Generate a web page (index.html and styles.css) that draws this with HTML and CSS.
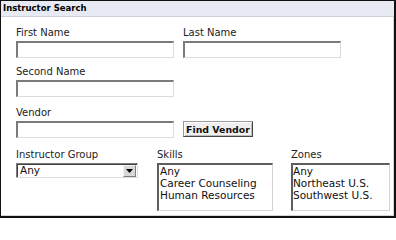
FILE: index.html
```html
<!DOCTYPE html>
<html>
<head>
<meta charset="utf-8">
<link rel="stylesheet" href="styles.css">
</head>
<body>
<div class="panel">
  <div class="panel-head">Instructor Search</div>
  <div class="panel-body">
    <div class="row">
      <div class="field w-first">
        <label class="lbl">First Name</label>
        <input class="txt" type="text">
      </div>
      <div class="field">
        <label class="lbl">Last Name</label>
        <input class="txt" type="text">
      </div>
    </div>
    <div class="row gap-7">
      <div class="field">
        <label class="lbl">Second Name</label>
        <input class="txt" type="text">
      </div>
    </div>
    <div class="row gap-9">
      <div class="field w-first">
        <label class="lbl">Vendor</label>
        <input class="txt" type="text">
      </div>
      <div class="field field-btn">
        <button class="btn" type="button">Find Vendor</button>
      </div>
    </div>
    <div class="row gap-10">
      <div class="field w-col1">
        <label class="lbl">Instructor Group</label>
        <div class="select">
          <span class="select-val">Any</span>
          <span class="select-arrow"><svg width="7" height="4" viewBox="0 0 7 4"><path d="M0 0h7L3.5 4z" fill="#000"/></svg></span>
        </div>
      </div>
      <div class="field w-col2">
        <label class="lbl">Skills</label>
        <div class="listbox lb-skills">
          <div class="opt">Any</div>
          <div class="opt">Career Counseling</div>
          <div class="opt">Human Resources</div>
        </div>
      </div>
      <div class="field">
        <label class="lbl">Zones</label>
        <div class="listbox lb-zones">
          <div class="opt">Any</div>
          <div class="opt">Northeast U.S.</div>
          <div class="opt">Southwest U.S.</div>
        </div>
      </div>
    </div>
  </div>
</div>
</body>
</html>
```

FILE: styles.css
```css
html, body {
  margin: 0;
  padding: 0;
  background: #fff;
}
.panel {
  box-sizing: border-box;
  width: 396px;
  height: 218px;
  border-style: solid;
  border-color: #111;
  border-width: 1px 2px 2px 1px;
  box-shadow: inset -1px -1px 0 #d6d6d6;
  font-family: "DejaVu Sans", Verdana, sans-serif;
  color: #222;
}
.panel-head {
  height: 15px;
  line-height: 15px;
  padding-left: 2px;
  background: #e7eaf3;
  border-bottom: 1px solid #cfd2dc;
  font-size: 8.5px;
  font-weight: bold;
  color: #000;
}
.panel-body {
  padding: 9px 0 0 15px;
}
.row {
  display: flex;
}
.gap-7 { margin-top: 7px; }
.gap-9 { margin-top: 9px; }
.gap-10 { margin-top: 10px; }
.field {
  display: flex;
  flex-direction: column;
  align-items: flex-start;
}
.w-first { width: 167px; }
.w-col1 { width: 141px; }
.w-col2 { width: 134px; }
.field-btn {
  padding-top: 15px;
}
.lbl {
  display: block;
  height: 13px;
  line-height: 13px;
  margin-bottom: 2px;
  font-size: 10px;
  white-space: nowrap;
}
.txt {
  box-sizing: border-box;
  width: 158px;
  height: 17px;
  margin: 0;
  padding: 0 2px;
  background: #fff;
  border-style: solid;
  border-width: 2px 1px 1px 2px;
  border-color: #7b7b7b #dcdcdc #dcdcdc #7b7b7b;
  outline: none;
  font-family: "DejaVu Sans", sans-serif;
  font-size: 10px;
}
.btn {
  box-sizing: border-box;
  width: 70px;
  height: 16px;
  margin: 0;
  padding: 0;
  background: #efefef;
  border: 1px solid #444;
  border-top-color: #9a9a9a;
  border-left-color: #9a9a9a;
  box-shadow: inset 1px 1px 0 #fff, inset -1px -1px 0 #bdbdbd;
  font-family: "DejaVu Sans", sans-serif;
  font-size: 9.4px;
  font-weight: bold;
  color: #111;
  line-height: 13px;
}
.select {
  box-sizing: border-box;
  display: flex;
  align-items: center;
  justify-content: space-between;
  width: 122px;
  height: 15px;
  background: #fff;
  border-style: solid;
  border-width: 1px;
  border-color: #7b7b7b #dcdcdc #dcdcdc #7b7b7b;
  box-shadow: inset 1px 1px 0 #404040;
  font-size: 10.5px;
  color: #111;
}
.select-val {
  padding-left: 3px;
  line-height: 13px;
}
.select-arrow {
  box-sizing: border-box;
  display: flex;
  align-items: center;
  justify-content: center;
  width: 13px;
  height: 12px;
  margin-right: 1px;
  margin-top: 1px;
  background: #d8d8d8;
  border: 1px solid;
  border-color: #f4f4f4 #808080 #808080 #f4f4f4;
}
.listbox {
  box-sizing: border-box;
  height: 48px;
  padding: 0 1px;
  background: #fff;
  border-style: solid;
  border-width: 2px 1px 1px 2px;
  border-color: #5e5e5e #d4d4d4 #d4d4d4 #5e5e5e;
  font-size: 10.5px;
  color: #111;
}
.lb-skills { width: 116px; }
.lb-zones { width: 99px; padding-left: 0; }
.opt {
  line-height: 12px;
  white-space: nowrap;
}
```
